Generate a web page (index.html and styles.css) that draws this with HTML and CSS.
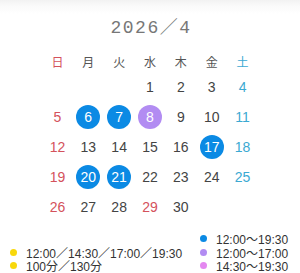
FILE: index.html
```html
<!DOCTYPE html>
<html lang="ja">
<head>
<meta charset="utf-8">
<link rel="stylesheet" href="styles.css">
</head>
<body>
<div class="page">
  <h1 class="title">2026／4</h1>
  <div class="cal">
    <div class="wd sun">日</div><div class="wd">月</div><div class="wd">火</div><div class="wd">水</div><div class="wd">木</div><div class="wd">金</div><div class="wd sat">土</div>

    <div class="d"></div><div class="d"></div><div class="d"></div>
    <div class="d"><span>1</span></div><div class="d"><span>2</span></div><div class="d"><span>3</span></div><div class="d sat"><span>4</span></div>

    <div class="d sun"><span>5</span></div><div class="d"><span class="c blue">6</span></div><div class="d"><span class="c blue">7</span></div><div class="d"><span class="c purple">8</span></div><div class="d"><span>9</span></div><div class="d"><span>10</span></div><div class="d sat"><span>11</span></div>

    <div class="d sun"><span>12</span></div><div class="d"><span>13</span></div><div class="d"><span>14</span></div><div class="d"><span>15</span></div><div class="d"><span>16</span></div><div class="d"><span class="c blue">17</span></div><div class="d sat"><span>18</span></div>

    <div class="d sun"><span>19</span></div><div class="d"><span class="c blue">20</span></div><div class="d"><span class="c blue">21</span></div><div class="d"><span>22</span></div><div class="d"><span>23</span></div><div class="d"><span>24</span></div><div class="d sat"><span>25</span></div>

    <div class="d sun"><span>26</span></div><div class="d"><span>27</span></div><div class="d"><span>28</span></div><div class="d sun"><span>29</span></div><div class="d"><span>30</span></div><div class="d"></div><div class="d"></div>
  </div>
  <div class="legend">
    <ul class="lg-col">
      <li><i class="dot yellow"></i>12:00／14:30／17:00／19:30</li>
      <li><i class="dot yellow"></i>100分／130分</li>
    </ul>
    <ul class="lg-col">
      <li><i class="dot blue"></i>12:00〜19:30</li>
      <li><i class="dot purple"></i>12:00〜17:00</li>
      <li><i class="dot pink"></i>14:30〜19:30</li>
    </ul>
  </div>
</div>
</body>
</html>
```
FILE: styles.css
```css
* { box-sizing: border-box; }
html, body { margin: 0; padding: 0; }
body {
  width: 300px;
  height: 273px;
  overflow: hidden;
  background: linear-gradient(#f2f2f2 0, #fafafa 6px, #ffffff 14px);
  font-family: "Liberation Sans", "Noto Sans CJK JP", sans-serif;
  color: #444;
}
.page { padding-top: 16px; }
.title {
  margin: 0;
  text-align: center;
  font-family: "Liberation Mono", "Noto Sans CJK JP", monospace;
  font-weight: 400;
  font-size: 18px;
  line-height: 24px;
  letter-spacing: 1.5px;
  color: #777;
  padding-left: 2px;
}
.cal {
  width: 216px;
  margin: 11px auto 0;
  display: grid;
  grid-template-columns: repeat(7, 1fr);
  grid-template-rows: 21px;
  grid-auto-rows: 30px;
}
.wd {
  display: flex;
  align-items: center;
  justify-content: center;
  font-family: "Noto Sans CJK JP", sans-serif;
  font-size: 12px;
  color: #555;
}
.d {
  display: flex;
  align-items: center;
  justify-content: center;
  font-size: 14px;
  color: #444;
}
.sun { color: #d4525c; }
.sat { color: #3ba9d2; }
.c {
  width: 24px;
  height: 24px;
  border-radius: 50%;
  display: flex;
  align-items: center;
  justify-content: center;
  color: #fff;
  font-size: 14px;
}
.c.blue { background: #0b8ae4; }
.c.purple { background: #b28cf2; }
.legend {
  margin-top: 10px;
  display: grid;
  grid-template-columns: 190px 1fr;
  align-items: end;
  padding-left: 10px;
  font-size: 12px;
  color: #333;
}
.lg-col { list-style: none; margin: 0; padding: 0; }
.lg-col li {
  display: flex;
  align-items: center;
  height: 13.5px;
  white-space: nowrap;
}
.dot {
  width: 7px;
  height: 7px;
  border-radius: 50%;
  margin-right: 9px;
  flex: none;
}
.dot.yellow { background: #f8d80c; }
.dot.blue { background: #0b8ae4; }
.dot.purple { background: #b28cf2; }
.dot.pink { background: #e488f0; }
```
